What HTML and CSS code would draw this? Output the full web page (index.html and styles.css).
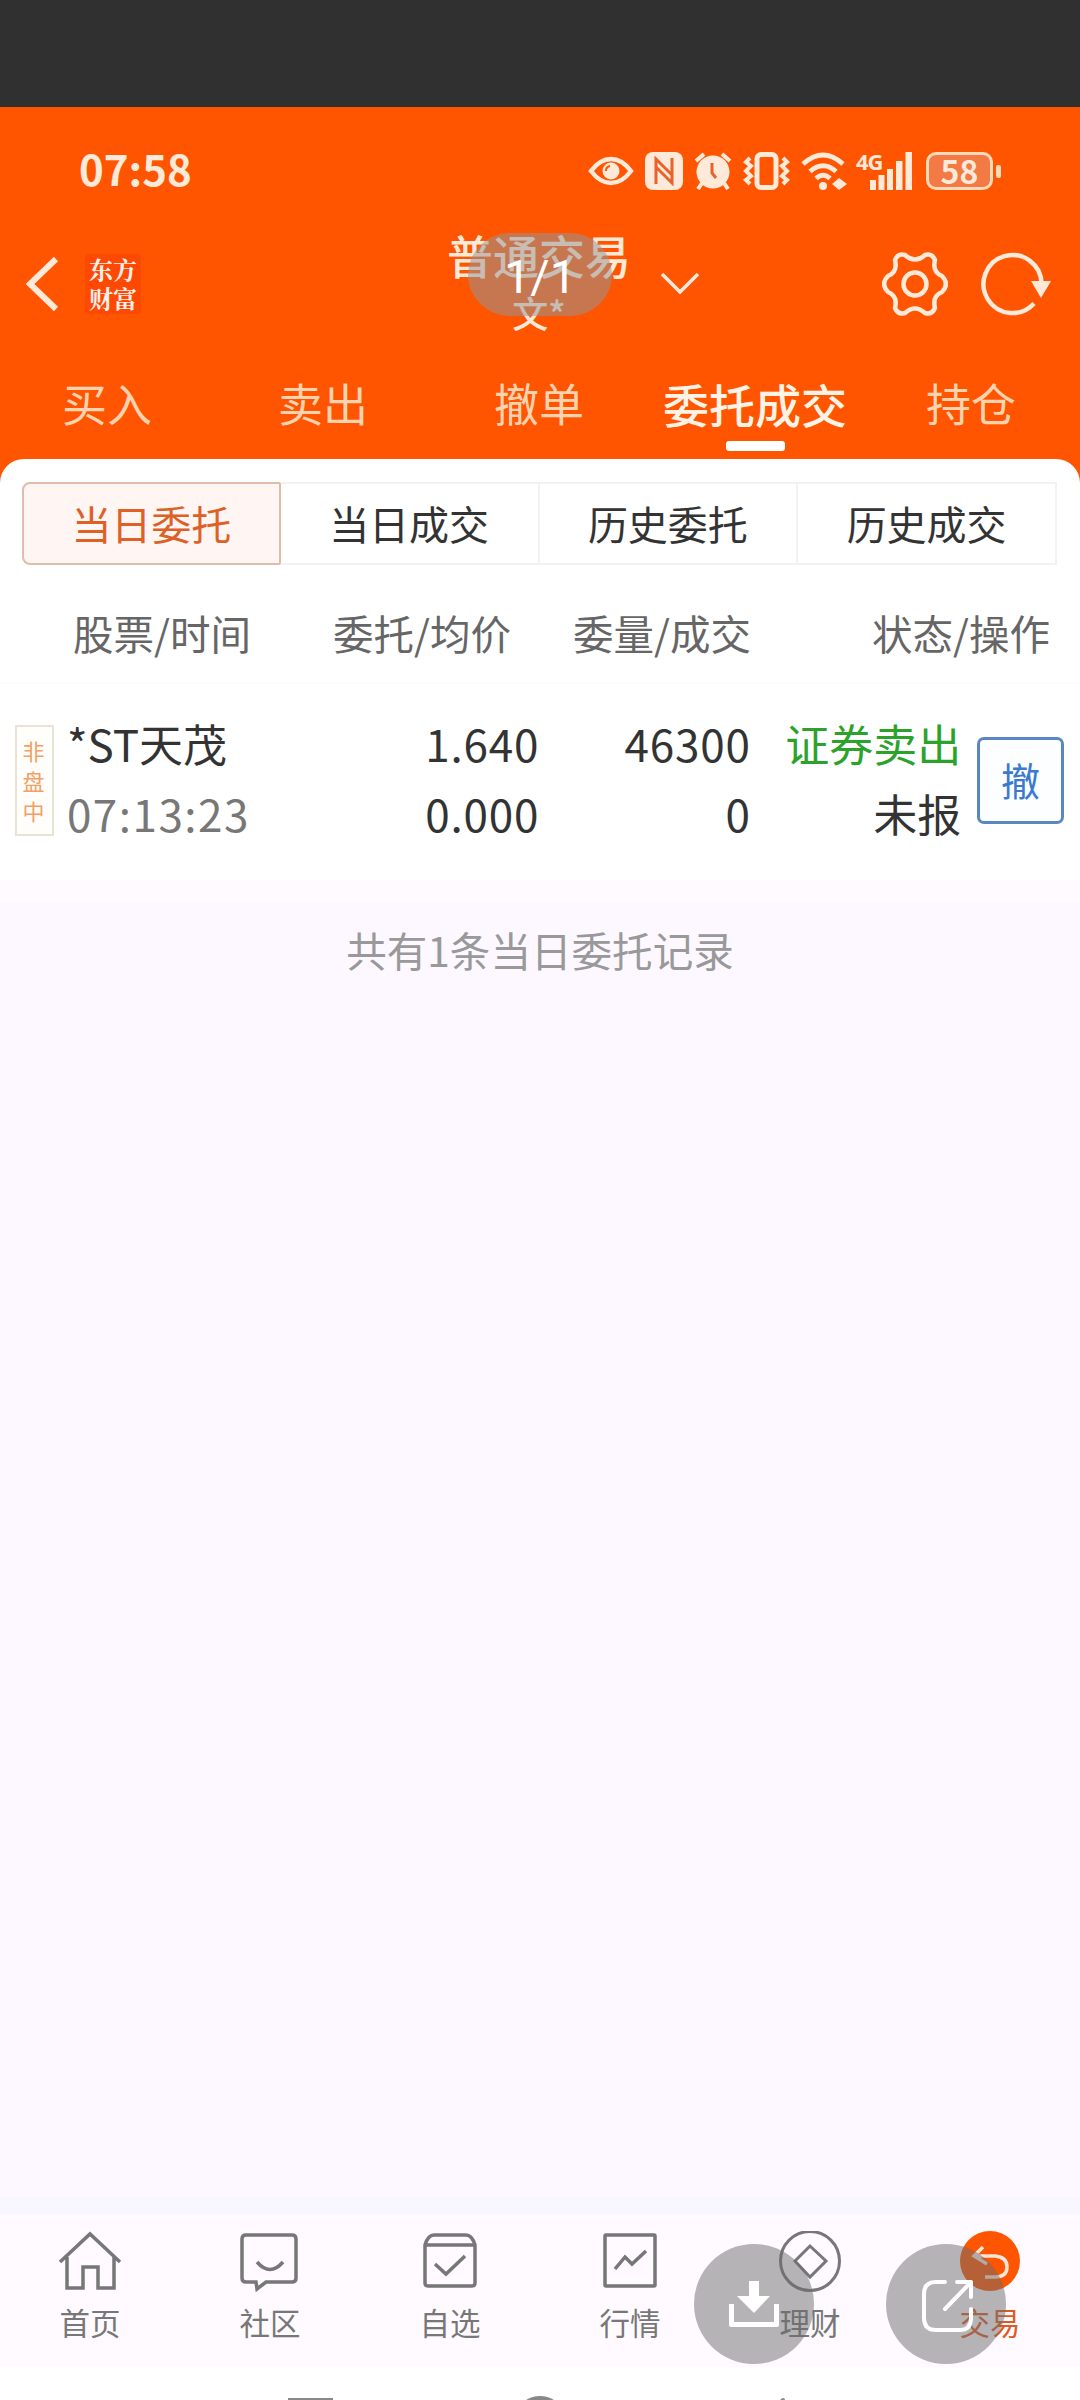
FILE: index.html
```html
<!DOCTYPE html>
<html lang="zh-CN">
<head>
  <meta charset="UTF-8" />
  <meta name="viewport" content="width=device-width, initial-scale=1.0" />
  <title>普通交易</title>
  <link rel="stylesheet" href="styles.css">
</head>
<body>
  <div class="screen">
    <div class="letterbox"></div>

    <header class="header">
      <div class="status-bar">
        <span class="clock">07:58</span>
        <div class="status-icons">
          <svg class="i-eye" width="46" height="38" viewBox="0 0 46 38" fill="none" stroke="currentColor" stroke-width="4.500">
            <path d="M3 19Q12 7 23 7T43 19Q34 31 23 31T3 19Z"/>
            <circle cx="23" cy="19" r="8.500" fill="currentColor" stroke="none"/>
            <path d="M18 19a5 5 0 0 1 4-5" stroke="#ff5500" stroke-width="2"/>
          </svg>
          <svg class="i-nfc" width="38" height="38" viewBox="0 0 38 38">
            <rect width="38" height="38" rx="8" fill="currentColor"/>
            <path d="M11 32V7l16 16V10M27 6v25L11 15" fill="none" stroke="#e8632c" stroke-width="3"/>
          </svg>
          <svg class="i-alarm" width="38" height="38" viewBox="0 0 38 38" fill="none" stroke="currentColor" stroke-width="4">
            <circle cx="19" cy="20" r="16.500" fill="currentColor" stroke="none"/>
            <path d="M2 9l8-7M36 9l-8-7M8 31l-4 6M30 31l4 6"/>
            <path d="M18 11v10l4 5" stroke="#e8632c" stroke-width="3"/>
          </svg>
          <svg class="i-vibrate" width="47" height="38" viewBox="0 0 47 38" fill="none" stroke="currentColor" stroke-width="5">
            <rect x="14" y="2.500" width="19" height="33" rx="4"/>
            <path d="M7 6L3 10l5 4-5 5 5 5-5 4 4 4M40 6l4 4-5 4 5 5-5 5 5 4-4 4" stroke-width="4"/>
          </svg>
          <svg class="i-wifi" width="48" height="38" viewBox="0 0 48 38" fill="none" stroke="currentColor" stroke-width="5">
            <path d="M2 12Q22-6 42 12M9 19.500Q22 8 35 19.500M15 26.500Q22 20 29 26.500"/>
            <circle cx="22" cy="34" r="4" fill="currentColor" stroke="none"/>
            <path d="M31 32l7-6 8 6-8 6z" fill="currentColor" stroke="none"/>
          </svg>
          <div class="signal">
            <span class="net">4G</span>
            <svg width="44" height="38" viewBox="0 0 44 38" fill="currentColor">
              <rect x="1" y="28" width="6" height="10"/><rect x="9.500" y="23" width="6" height="15"/><rect x="18" y="17" width="6" height="21"/><rect x="27" y="9" width="6.500" height="29"/><rect x="36.500" y="0" width="6.500" height="38"/>
            </svg>
          </div>
          <div class="battery"><span class="level">58</span></div>
          <span class="battery-cap"></span>
        </div>
      </div>

      <div class="app-bar">
        <svg class="back" width="34" height="56" viewBox="0 0 34 56" fill="none" stroke="currentColor" stroke-width="6">
          <path d="M31 3L5 28l26 25"/>
        </svg>
        <div class="logo"><span>东方</span><span>财富</span></div>
        <div class="title">
          <div class="title-main">普通交易</div>
          <div class="title-sub">文*</div>
        </div>
        <svg class="arrow-down" width="40" height="24" viewBox="0 0 40 24" fill="none" stroke="currentColor" stroke-width="3.500">
          <path d="M2 2l18 18L38 2"/>
        </svg>
        <svg class="gear" width="66" height="66" viewBox="0 0 66 66" fill="none" stroke="currentColor" stroke-width="4.500" stroke-linejoin="round">
          <path d="M23 4Q33 13 43 4Q50 2 53 9Q50 21 60 25Q68 33 60 41Q50 45 53 57Q50 64 43 62Q33 53 23 62Q16 64 13 57Q16 45 6 41Q-2 33 6 25Q16 21 13 9Q16 2 23 4Z"/>
          <circle cx="33" cy="33" r="11.500"/>
        </svg>
        <svg class="refresh" width="70" height="66" viewBox="0 0 70 66" fill="none" stroke="currentColor" stroke-width="4.500">
          <path d="M60.500 33A29 29 0 1 0 53 52.500"/>
          <path d="M50 30h20L60 47z" fill="currentColor" stroke="none"/>
        </svg>
      </div>

      <nav class="tabs">
        <a class="tab">买入</a>
        <a class="tab">卖出</a>
        <a class="tab">撤单</a>
        <a class="tab active">委托成交</a>
        <a class="tab">持仓</a>
      </nav>
    </header>

    <main class="panel">
      <div class="segments">
        <div class="segment selected">当日委托</div>
        <div class="segment">当日成交</div>
        <div class="segment">历史委托</div>
        <div class="segment">历史成交</div>
      </div>

      <div class="table-head">
        <span>股票/时间</span>
        <span>委托/均价</span>
        <span>委量/成交</span>
        <span>状态/操作</span>
      </div>

      <div class="order">
        <div class="tag"><span>非</span><span>盘</span><span>中</span></div>
        <div class="cell name"><div>*ST天茂</div><div class="time">07:13:23</div></div>
        <div class="cell price"><div>1.640</div><div>0.000</div></div>
        <div class="cell amount"><div>46300</div><div>0</div></div>
        <div class="cell state"><div class="sell">证券卖出</div><div>未报</div></div>
        <button class="cancel">撤</button>
      </div>
    </main>

    <div class="list-end">共有1条当日委托记录</div>

    <footer class="bottom-nav">
      <div class="nav-item">
        <svg width="64" height="64" viewBox="0 0 64 64" fill="none" stroke="currentColor" stroke-width="3.500">
          <path d="M2 31L32 3l30 28M9 26v31h16V36h15v21h16V26"/>
        </svg>
        <span>首页</span>
      </div>
      <div class="nav-item">
        <svg width="64" height="64" viewBox="0 0 64 64" fill="none" stroke="currentColor" stroke-width="3.500">
          <path d="M8 4h46q4 0 4 4v39q0 4-4 4H28l-9 7-1-7H8q-4 0-4-4V8q0-4 4-4zM19 31q13 15 26 0"/>
        </svg>
        <span>社区</span>
      </div>
      <div class="nav-item">
        <svg width="64" height="64" viewBox="0 0 64 64" fill="none" stroke="currentColor" stroke-width="3.500">
          <path d="M7 14q3-10 9-10h32q6 0 9 10v38q0 3-3 3H10q-3 0-3-3zM8 14h48M17 33l11 10 19-18"/>
        </svg>
        <span>自选</span>
      </div>
      <div class="nav-item">
        <svg width="64" height="64" viewBox="0 0 64 64" fill="none" stroke="currentColor" stroke-width="3.500">
          <rect x="7" y="4" width="50" height="51" rx="1"/>
          <path d="M17 38l10-12 7 7 14-13"/>
        </svg>
        <span>行情</span>
      </div>
      <div class="nav-item">
        <svg width="64" height="64" viewBox="0 0 64 64" fill="none" stroke="currentColor" stroke-width="3">
          <circle cx="32" cy="30" r="29.500"/>
          <path d="M32 15l16 15-16 16-15-16z"/>
        </svg>
        <span>理财</span>
      </div>
      <div class="nav-item current">
        <svg width="64" height="64" viewBox="0 0 64 64" fill="none">
          <circle cx="32" cy="30" r="30" fill="#ff5500"/>
          <path d="M25 16l-9 9 13 8M16 25h21q12 1 12 11t-12 10h-10" stroke="#ffe6d6" stroke-width="3.500"/>
        </svg>
        <span>交易</span>
      </div>
    </footer>

    <div class="system-nav">
      <svg width="1080" height="33" viewBox="0 0 1080 33" fill="none" stroke="#888" stroke-width="4">
        <rect x="290" y="33" width="41" height="40"/>
        <circle cx="540" cy="55" r="24"/>
        <path d="M755 61l28-28v46z" stroke-linejoin="round"/>
      </svg>
    </div>

    <!-- image viewer controls -->
    <div class="counter">1/1</div>
    <div class="fab download">
      <svg width="52" height="48" viewBox="0 0 52 48" fill="#fff">
        <path d="M21 1h10v15h11L26 33 9 16h12z"/>
        <path d="M3.500 24v20.500h45V24" fill="none" stroke="#fff" stroke-width="5" stroke-linejoin="round"/>
      </svg>
    </div>
    <div class="fab share">
      <svg width="52" height="52" viewBox="0 0 52 52" fill="none" stroke="#fff" stroke-width="4" stroke-linecap="round" stroke-linejoin="round">
        <path d="M23 2H14Q2 2 2 14v24q0 12 12 12h24q11 0 11-12V29M35 2h14v15M49 2L23 29"/>
      </svg>
    </div>
  </div>
</body>
</html>
```
FILE: styles.css
```css
* {
  box-sizing: border-box;
}
body {
  margin: 0;
  font-family: 'Noto Sans CJK SC', sans-serif;
  color: #333;
}
svg {
  display: block;
  flex-shrink: 0;
}
.screen {
  position: relative;
  display: flex;
  flex-direction: column;
  width: 1080px;
  height: 2400px;
  background: #fdf7ff;
  overflow: hidden;
}
.letterbox {
  height: 107px;
  background: #303030;
}

/* header */
.header {
  height: 376px;
  background: #ff5500;
  color: #ffe9d8;
}
.status-bar {
  display: flex;
  justify-content: space-between;
  align-items: center;
  height: 128px;
  padding: 0 79px 0 79px;
}
.clock {
  margin-top: -6px;
  font-size: 42px;
  font-weight: 700;
  line-height: 1;
}
.status-icons {
  display: flex;
  align-items: center;
  gap: 11px;
}
.signal {
  display: flex;
  width: 57px;
  height: 38px;
  margin-left: -4px;
}
.net {
  width: 13px;
  font-family: 'Open Sans', sans-serif;
  font-size: 22px;
  font-weight: 700;
  line-height: 18px;
  letter-spacing: -1px;
}
.battery {
  display: flex;
  justify-content: center;
  align-items: center;
  width: 67px;
  height: 38px;
  margin-left: 2px;
  border: 3px solid #ffd9b8;
  border-radius: 10px;
  background: #f47a45;
}
.level {
  margin-top: -3px;
  font-size: 32px;
  font-weight: 700;
  line-height: 32px;
}
.battery-cap {
  width: 5px;
  height: 13px;
  margin-left: -8px;
  border-radius: 2px;
  background: #ffd9b8;
}
.app-bar {
  display: flex;
  align-items: center;
  height: 98px;
  padding: 0 29px 0 25px;
}
.logo {
  display: flex;
  flex-direction: column;
  width: 56px;
  height: 60px;
  margin: 0 304px 0 26px;
  padding-left: 4px;
  border-radius: 4px;
  background: #fd4903;
  color: #fff0ea;
  font-family: 'Noto Serif CJK SC', 'Noto Sans CJK SC', serif;
  font-size: 24px;
  font-weight: 700;
  line-height: 29px;
  white-space: nowrap;
}
.title {
  width: 188px;
  text-align: center;
}
.title-main {
  font-size: 46px;
  font-weight: 500;
  line-height: 48px;
}
.title-sub {
  padding-top: 8px;
  font-size: 36px;
  font-weight: 500;
  line-height: 52px;
}
.arrow-down {
  margin-left: 27px;
}
.gear {
  margin-left: auto;
}
.refresh {
  margin-left: 33px;
}
.tabs {
  display: grid;
  grid-template-columns: repeat(5, 1fr);
  height: 126px;
}
.tab {
  display: flex;
  flex-direction: column;
  align-items: center;
  padding: 40px 2px 0 0;
  font-size: 45px;
  line-height: 60px;
  color: #ffd3b0;
}
.tab.active {
  color: #fff3e6;
  font-size: 46px;
  font-weight: 500;
}
.tab.active::after {
  content: '';
  width: 59px;
  height: 10px;
  margin-top: 8px;
  border-radius: 3px;
  background: #fff;
}

/* orders */
.panel {
  height: 443px;
  margin-top: -24px;
  padding-top: 23px;
  border-radius: 24px 24px 0 0;
  background: linear-gradient(#fff 421px, #fefaff 421px);
}
.segments {
  display: grid;
  grid-template-columns: repeat(4, 1fr);
  height: 83px;
  margin: 0 23px 0 22px;
}
.segment {
  display: flex;
  justify-content: center;
  align-items: center;
  border: 2px solid #f3f1f4;
  border-left: none;
  font-size: 40px;
  line-height: 76px;
  padding-bottom: 2px;
}
.segment.selected {
  border: 2px solid #e0bcab;
  border-radius: 8px 2px 2px 8px;
  background: #fff5f3;
  color: #dd6126;
}
.table-head {
  display: grid;
  grid-template-columns: 251px 260px 240px 299px;
  height: 119px;
  padding-top: 3px;
  border-bottom: 1px solid #fafafa;
  font-size: 40.5px;
  line-height: 130px;
  text-align: right;
  color: #666;
}
.order {
  display: flex;
  height: 196px;
  padding: 41px 16px 0 15px;
}
.tag {
  display: flex;
  flex-direction: column;
  align-items: center;
  width: 39px;
  height: 111px;
  padding: 8px 2px 0 0;
  border: 2px solid #eae3d5;
  background: #fffefa;
  font-size: 22px;
  line-height: 30px;
  color: #f2a065;
}
.cell {
  font-size: 44px;
  line-height: 70px;
  text-align: right;
  margin-top: -17px;
}
.name {
  width: 195px;
  padding-left: 13px;
  text-align: left;
  white-space: nowrap;
}
.time {
  color: #777;
  letter-spacing: 1.5px;
}
.price {
  width: 291px;
  letter-spacing: 0.8px;
}
.amount {
  width: 212px;
  letter-spacing: 0.8px;
}
.state {
  width: 211px;
}
.sell {
  color: #2ba32b;
}
.cancel {
  width: 87px;
  height: 87px;
  margin: 12px 0 0 16px;
  padding: 0 0 4px;
  border: 3px solid #5b86c4;
  border-radius: 7px;
  background: #fdfeff;
  font-family: inherit;
  font-size: 39px;
  color: #3a7bd0;
}
.list-end {
  flex: 1;
  padding-top: 18px;
  font-size: 40.6px;
  line-height: 60px;
  text-align: center;
  color: #999;
}

/* bottom navigation */
.bottom-nav {
  display: grid;
  grid-template-columns: repeat(6, 1fr);
  height: 169px;
  padding-top: 17px;
  border-top: 16px solid #f8f6ff;
  background: #fefaff;
}
.nav-item {
  display: flex;
  flex-direction: column;
  align-items: center;
  font-size: 30.5px;
  line-height: 44px;
  color: #777;
}
.nav-item span {
  margin-top: 5px;
}
.nav-item.current {
  color: #e05a20;
}
.system-nav {
  height: 33px;
  background: #fff;
}

/* viewer controls float over the picture */
.counter {
  position: absolute;
  top: 233px;
  left: 468px;
  width: 144px;
  height: 83px;
  border-radius: 42px;
  background: rgba(150, 150, 150, 0.53);
  font-family: Roboto, sans-serif;
  font-size: 47px;
  line-height: 87px;
  text-align: center;
  color: #fff;
}
.fab {
  position: absolute;
  top: 2244px;
  display: flex;
  justify-content: center;
  align-items: center;
  width: 120px;
  height: 120px;
  border-radius: 50%;
  background: rgba(108, 108, 108, 0.5);
}
.download {
  left: 694px;
}
.share {
  left: 886px;
  padding: 4px 0 0 3px;
}
```
